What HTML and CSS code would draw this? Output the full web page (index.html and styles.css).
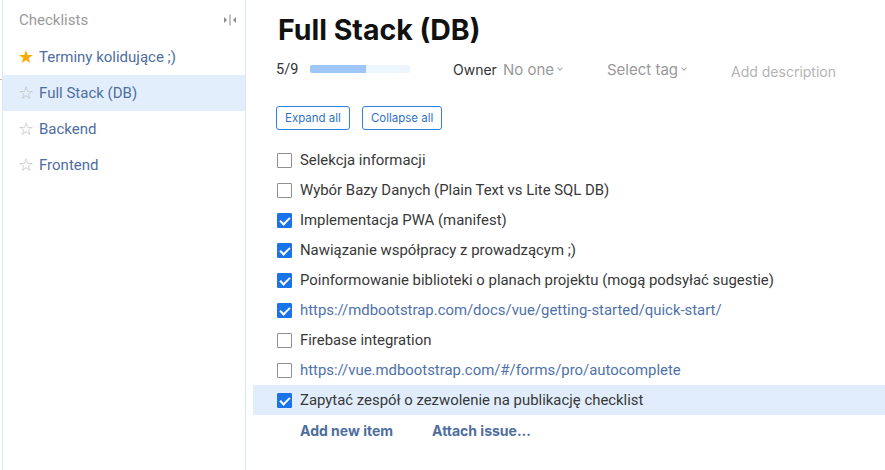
FILE: index.html
```html
<!DOCTYPE html>
<html>
<head>
<meta charset="utf-8">
<link rel="stylesheet" href="styles.css">
</head>
<body>
<div class="app">
  <aside class="sidebar">
    <div class="side-head">
      <span class="side-title">Checklists</span>
      <svg class="collapse" width="16" height="14" viewBox="0 0 16 14">
        <path d="M2 4 L5 7 L2 10 Z" fill="#8a8a8a"/>
        <rect x="7.5" y="1.5" width="1" height="11" fill="#8a8a8a"/>
        <path d="M14 4 L11 7 L14 10 Z" fill="#8a8a8a"/>
      </svg>
    </div>
    <div class="side-item"><span class="star on">★</span><span>Terminy kolidujące ;)</span></div>
    <div class="side-item active"><span class="star">☆</span><span>Full Stack (DB)</span></div>
    <div class="side-item"><span class="star">☆</span><span>Backend</span></div>
    <div class="side-item"><span class="star">☆</span><span>Frontend</span></div>
  </aside>
  <main class="main">
    <div class="head">
      <h1 class="title">Full Stack (DB)</h1>
      <div class="meta">
        <span class="count">5/9</span>
        <div class="bar"><div class="fill" style="width:56%"></div></div>
        <span class="owner">Owner</span>
        <span class="drop">No one<span class="chev"></span></span>
        <span class="drop tag">Select tag<span class="chev"></span></span>
        <span class="desc">Add description</span>
      </div>
      <div class="buttons">
        <button class="btn">Expand all</button>
        <button class="btn">Collapse all</button>
      </div>
    </div>
    <ul class="list">
      <li class="item"><span class="cb"></span><span>Selekcja informacji</span></li>
      <li class="item"><span class="cb"></span><span>Wybór Bazy Danych (Plain Text vs Lite SQL DB)</span></li>
      <li class="item"><span class="cb checked"></span><span>Implementacja PWA (manifest)</span></li>
      <li class="item"><span class="cb checked"></span><span>Nawiązanie współpracy z prowadzącym ;)</span></li>
      <li class="item"><span class="cb checked"></span><span>Poinformowanie biblioteki o planach projektu (mogą podsyłać sugestie)</span></li>
      <li class="item"><span class="cb checked"></span><a class="link">https://mdbootstrap.com/docs/vue/getting-started/quick-start/</a></li>
      <li class="item"><span class="cb"></span><span>Firebase integration</span></li>
      <li class="item"><span class="cb"></span><a class="link">https://vue.mdbootstrap.com/#/forms/pro/autocomplete</a></li>
      <li class="item hl"><span class="cb checked"></span><span>Zapytać zespół o zezwolenie na publikację checklist</span></li>
    </ul>
    <div class="actions">
      <span class="action">Add new item</span>
      <span class="action">Attach issue...</span>
    </div>
  </main>
</div>
</body>
</html>
```
FILE: styles.css
```css
* { box-sizing: border-box; }
html, body { margin: 0; padding: 0; background: #fff; }
body { font-family: Roboto, "Noto Sans", sans-serif; width: 885px; height: 470px; overflow: hidden; }

.app { display: flex; height: 470px; padding-left: 2px; position: relative; }
.app::before { content: ""; position: absolute; left: 0; top: 79px; width: 2px; height: 1px; background: #bbb; }

.sidebar {
  width: 244px;
  flex: none;
  border-left: 1px solid #dce8f8;
  border-right: 1px solid #dce8f8;
}
.side-head {
  height: 39px;
  display: flex;
  align-items: center;
  justify-content: space-between;
  padding: 0 7px 0 16px;
}
.side-title { font-size: 15px; color: #9a9a9a; }
.collapse { display: block; }
.side-item {
  height: 36px;
  display: flex;
  align-items: center;
  padding-left: 16px;
  font-size: 15px;
  color: #4e6e9e;
}
.side-item.active { background: #e3eefc; }
.star { width: 20px; font-size: 18px; color: #bbb; line-height: 1; margin-left: -1px; margin-right: 1px; }
.star.on { color: #f5ab00; }

.main { flex: 1; padding-left: 7px; }
.head { padding-left: 23px; }
.title {
  margin: 0;
  padding: 12px 0 0 2px;
  height: 48px;
  font-family: Inter, sans-serif;
  font-weight: 700;
  font-size: 28.5px;
  color: #111;
  line-height: 36px;
}
.meta {
  display: flex;
  align-items: center;
  height: 42px;
  font-family: Inter, sans-serif;
  font-size: 14px;
}
.count { color: #333; width: 34px; font-family: Roboto, sans-serif; font-size: 14.5px; }
.bar { width: 100px; height: 8px; background: #edf5fe; border-radius: 2px; overflow: hidden; margin-right: 43px; }
.fill { height: 100%; background: #9fc6f8; }
.owner { color: #333; margin-right: 6px; }
.drop { color: #999; display: inline-flex; align-items: center; font-size: 15px; }
.drop.tag { margin-left: 45px; }
.chev {
  width: 4px; height: 4px;
  border-right: 1px solid #aaa;
  border-bottom: 1px solid #aaa;
  transform: rotate(45deg);
  margin-left: 4px;
  margin-top: -3px;
}
.desc { color: #b4b4b4; margin-left: 45px; margin-top: 4px; }

.buttons { display: flex; gap: 12px; padding-top: 16px; height: 55px; }
.btn {
  height: 24px;
  padding: 0 8px;
  background: #fff;
  border: 1px solid #2f80e4;
  border-radius: 3px;
  color: #2f73c6;
  font-family: Inter, sans-serif;
  font-size: 11.5px;
}

.list { list-style: none; margin: 0; padding: 0; }
.item {
  height: 30px;
  display: flex;
  align-items: center;
  padding-left: 24px;
  font-size: 14.9px;
  color: #383838;
}
.item.hl { background: #e1edfc; }
.cb {
  width: 15px; height: 15px;
  border: 1px solid #8f8f8f;
  border-radius: 1px;
  margin-right: 8px;
  flex: none;
  position: relative;
  background: #fff;
}
.cb.checked { background: #1a73e8; border-color: #1a73e8; }
.cb.checked::after {
  content: "";
  position: absolute;
  left: 4px; top: 1px;
  width: 4px; height: 8px;
  border-right: 2px solid #fff;
  border-bottom: 2px solid #fff;
  transform: rotate(45deg);
}
.link { color: #4e72a8; text-decoration: none; }

.actions { display: flex; gap: 39px; padding-left: 47px; height: 30px; align-items: center; }
.action { font-family: Inter, sans-serif; font-weight: 700; font-size: 14px; color: #4e6e9e; }
```
